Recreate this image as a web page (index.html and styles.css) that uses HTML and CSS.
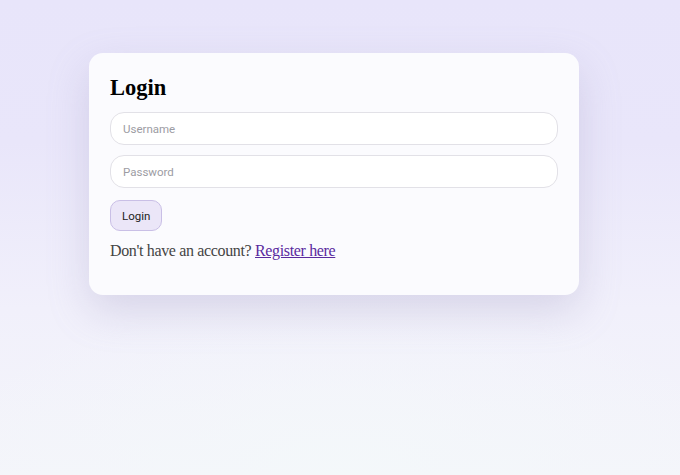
FILE: index.html
```html
<!DOCTYPE html>
<html>
<head>
<meta charset="utf-8">
<link rel="stylesheet" href="styles.css">
</head>
<body>
<div class="page">
  <div class="card">
    <h1 class="title">Login</h1>
    <form class="form">
      <input class="field" type="text" placeholder="Username">
      <input class="field" type="password" placeholder="Password">
      <button class="btn" type="button">Login</button>
    </form>
    <p class="note">Don't have an account? <a class="link" href="#">Register here</a></p>
  </div>
</div>
</body>
</html>
```
FILE: styles.css
```css
html, body {
  margin: 0;
  height: 100%;
}
body {
  background:
    radial-gradient(ellipse 60% 40% at 50% 100%, rgba(244,248,250,0.9), rgba(244,248,250,0) 100%),
    linear-gradient(180deg, #e8e5fa 0%, #e9e6fa 30%, #f1f0fb 65%, #f4f5fa 100%);
  font-family: "Liberation Serif", serif;
}
.page {
  padding: 53px 0 0 89px;
}
.card {
  width: 490px;
  box-sizing: border-box;
  padding: 21px 21px 34px 21px;
  background: #fbfbfe;
  border-radius: 14px;
  box-shadow: 0 16px 40px rgba(150, 145, 185, 0.28);
}
.title {
  margin: 0 0 10px 0;
  font-size: 22.5px;
  line-height: 28px;
  font-weight: bold;
  color: #000;
}
.form {
  display: flex;
  flex-direction: column;
  align-items: flex-start;
  gap: 10px;
}
.field {
  width: 100%;
  box-sizing: border-box;
  height: 33px;
  border: 1px solid #e2e1e7;
  border-radius: 14px;
  background: #fff;
  padding: 0 12px;
  font-family: Roboto, "Noto Sans", sans-serif;
  font-size: 11.5px;
  color: #333;
  outline: none;
}
.field::placeholder {
  color: #9c9ca3;
}
.btn {
  margin-top: 2px;
  height: 31px;
  padding: 0 11px;
  border: 1px solid #c9bfe6;
  border-radius: 10px;
  background: #ebe6f8;
  font-family: Roboto, "Noto Sans", sans-serif;
  font-size: 11.5px;
  color: #222;
}
.note {
  margin: 10px 0 0 0;
  font-size: 16px;
  line-height: 20px;
  letter-spacing: -0.35px;
  color: #444;
}
.link {
  color: #5a2a9e;
}
```
